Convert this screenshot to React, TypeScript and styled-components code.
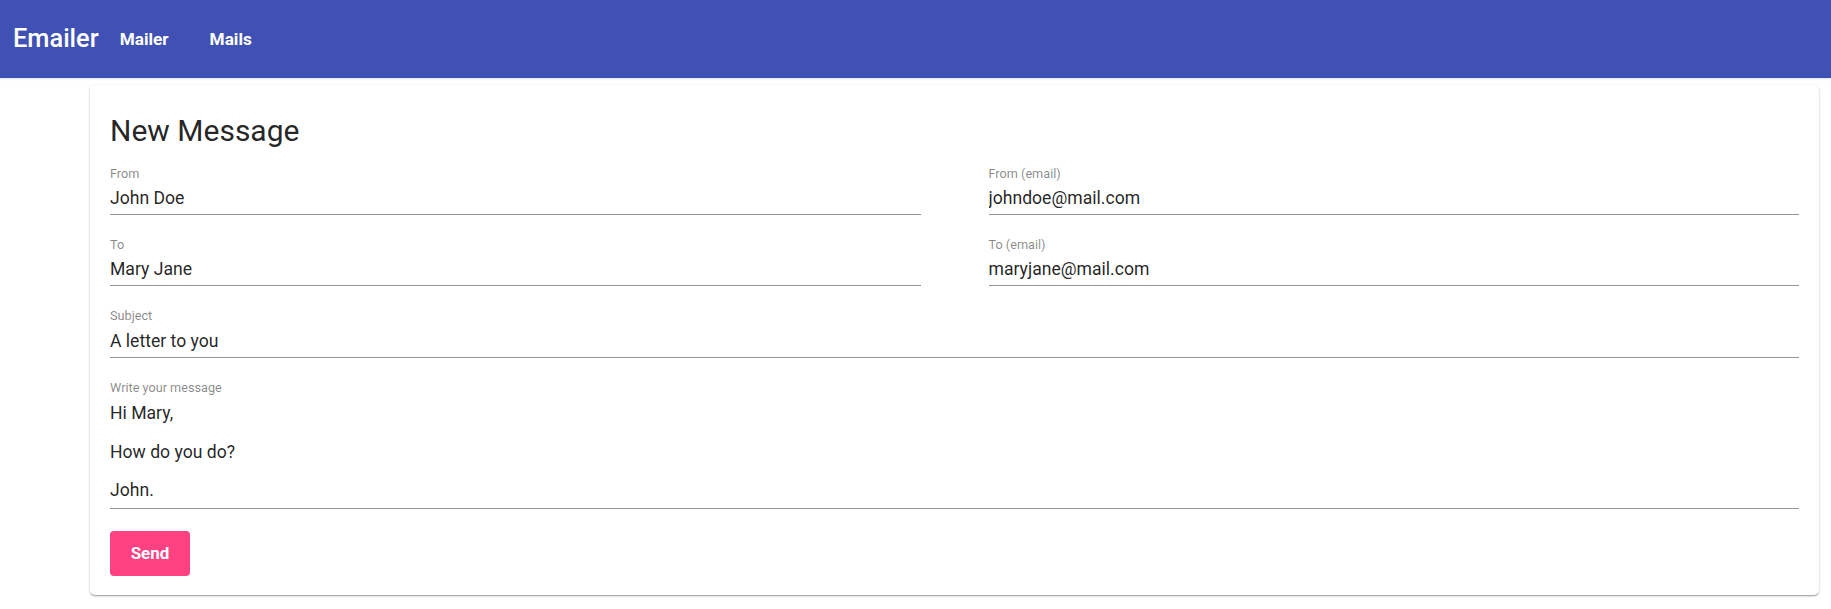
import React from 'react';
import styled, { createGlobalStyle } from 'styled-components';

const GlobalStyle = createGlobalStyle`
  body {
    margin: 0;
    background: #ffffff;
    font-family: Roboto, "Liberation Sans", Arial, sans-serif;
  }
`;

const AppBar = styled.header`
  height: 78px;
  background-color: #3f51b5;
  color: #ffffff;
  display: flex;
  align-items: center;
  padding-left: 13px;
  box-shadow: 0 1px 2px rgba(0, 0, 0, 0.12);
`;

const Brand = styled.div`
  font-size: 25.4px;
  font-weight: 500;
  line-height: 1;
`;

const Nav = styled.nav`
  display: flex;
  gap: 41px;
  margin-left: 21px;
`;

const NavLink = styled.a`
  font-size: 17.2px;
  font-weight: 700;
  color: #ffffff;
  text-decoration: none;
  cursor: pointer;
`;

const Card = styled.main`
  margin: 7px 12px 14px 90px;
  padding: 20px 20px 19px;
  background: #ffffff;
  border-radius: 5px;
  box-shadow: 0 1px 3px rgba(0, 0, 0, 0.2), 0 1px 1px rgba(0, 0, 0, 0.14),
    0 2px 1px -1px rgba(0, 0, 0, 0.12);
`;

const Title = styled.h1`
  margin: 8px 0 16.5px;
  font-size: 30px;
  font-weight: 400;
  line-height: 36px;
  color: rgba(0, 0, 0, 0.87);
`;

const Form = styled.form`
  display: grid;
  grid-template-columns: 1fr 1fr;
  column-gap: 68px;
  row-gap: 22px;
`;

const Field = styled.label<{ $wide?: boolean }>`
  display: flex;
  flex-direction: column;
  grid-column: ${({ $wide }) => ($wide ? '1 / -1' : 'auto')};
`;

const Label = styled.span`
  font-size: 12.7px;
  line-height: 15px;
  color: rgba(0, 0, 0, 0.48);
`;

const Input = styled.input`
  margin: 7.5px 0 0;
  padding: 0 0 6.7px;
  height: 19.3px;
  border: none;
  border-bottom: 1px solid rgba(0, 0, 0, 0.42);
  outline: none;
  background: transparent;
  font-family: inherit;
  font-size: 17.6px;
  line-height: 19.3px;
  color: rgba(0, 0, 0, 0.87);
`;

const TextArea = styled.textarea`
  margin: 7.5px 0 0;
  padding: 1.6px 0 7.4px;
  height: 96.5px;
  border: none;
  border-bottom: 1px solid rgba(0, 0, 0, 0.42);
  outline: none;
  resize: none;
  overflow: hidden;
  background: transparent;
  font-family: inherit;
  font-size: 17.6px;
  line-height: 19.3px;
  color: rgba(0, 0, 0, 0.87);
`;

const SendButton = styled.button`
  margin-top: 22px;
  width: 80px;
  height: 45px;
  border: none;
  border-radius: 4px;
  background-color: #ff4081;
  color: #ffffff;
  font-family: inherit;
  font-size: 17px;
  font-weight: 700;
  cursor: pointer;
`;

const message = 'Hi Mary,\n\nHow do you do?\n\nJohn.';

const App: React.FC = () => {
  return (
    <>
      <GlobalStyle />
      <AppBar>
        <Brand>Emailer</Brand>
        <Nav>
          <NavLink>Mailer</NavLink>
          <NavLink>Mails</NavLink>
        </Nav>
      </AppBar>
      <Card>
        <Title>New Message</Title>
        <Form onSubmit={(e) => e.preventDefault()}>
          <Field>
            <Label>From</Label>
            <Input defaultValue="John Doe" />
          </Field>
          <Field>
            <Label>From (email)</Label>
            <Input defaultValue="johndoe@mail.com" />
          </Field>
          <Field>
            <Label>To</Label>
            <Input defaultValue="Mary Jane" />
          </Field>
          <Field>
            <Label>To (email)</Label>
            <Input defaultValue="maryjane@mail.com" />
          </Field>
          <Field $wide>
            <Label>Subject</Label>
            <Input defaultValue="A letter to you" />
          </Field>
          <Field $wide>
            <Label>Write your message</Label>
            <TextArea rows={5} defaultValue={message} />
          </Field>
        </Form>
        <SendButton type="button">Send</SendButton>
      </Card>
    </>
  );
};

export default App;
